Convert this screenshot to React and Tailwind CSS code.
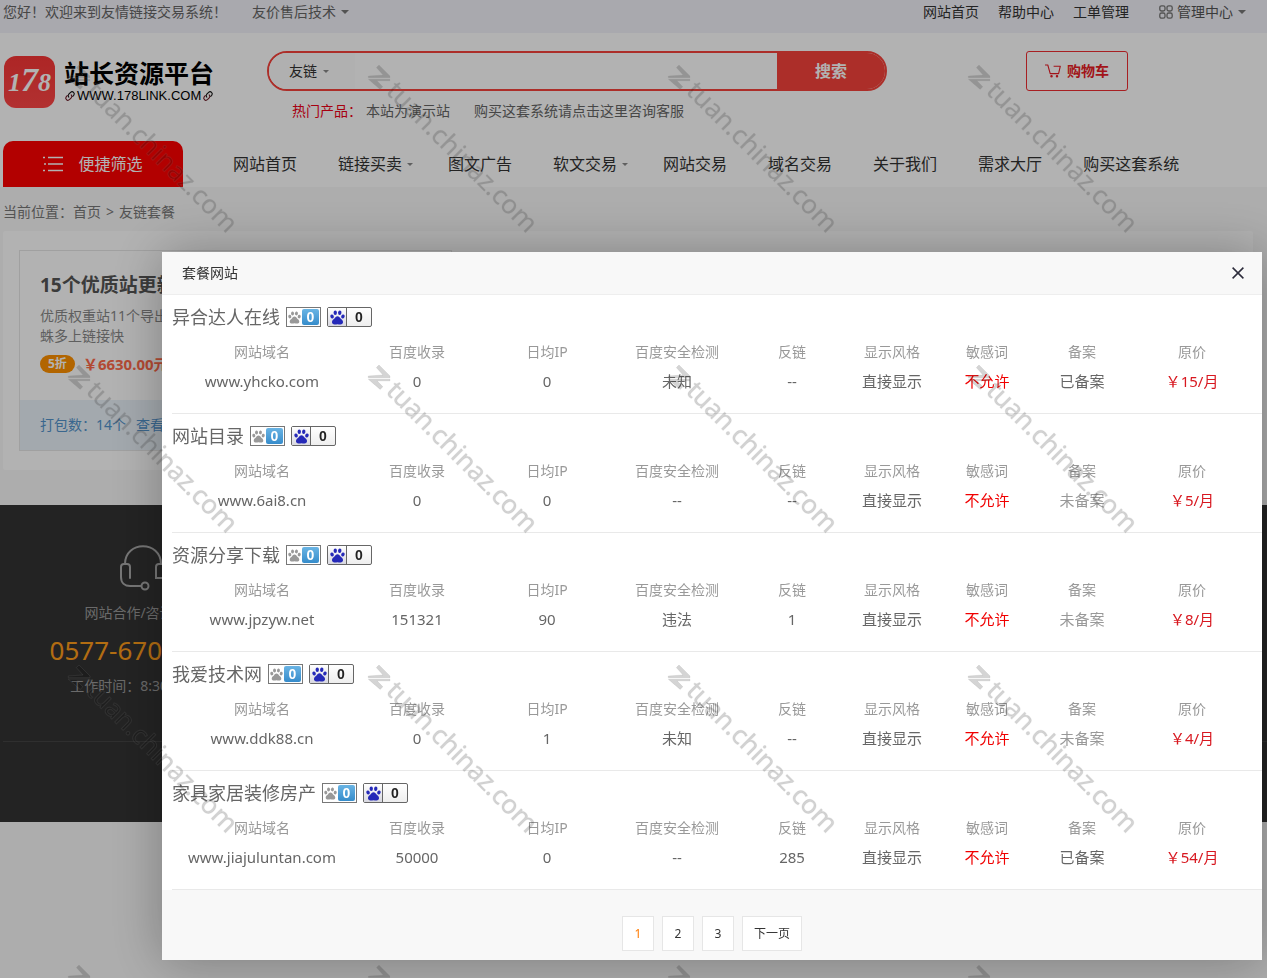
import { useState } from 'react';

const navItems = [
  { label: '网站首页' },
  { label: '链接买卖', menu: true },
  { label: '图文广告' },
  { label: '软文交易', menu: true },
  { label: '网站交易' },
  { label: '域名交易' },
  { label: '关于我们' },
  { label: '需求大厅' },
  { label: '购买这套系统' },
];

const columns = [
  { label: '网站域名', width: 'w-[180px]' },
  { label: '百度收录', width: 'w-[130px]' },
  { label: '日均IP', width: 'w-[130px]' },
  { label: '百度安全检测', width: 'w-[130px]' },
  { label: '反链', width: 'w-[100px]' },
  { label: '显示风格', width: 'w-[100px]' },
  { label: '敏感词', width: 'w-[90px]' },
  { label: '备案', width: 'w-[100px]' },
  { label: '原价', width: 'w-[120px]' },
];

const sites = [
  { name: '异合达人在线', domain: 'www.yhcko.com', indexed: '0', ip: '0', safety: '未知', links: '--', record: true, price: '15' },
  { name: '网站目录', domain: 'www.6ai8.cn', indexed: '0', ip: '0', safety: '--', links: '--', record: false, price: '5' },
  { name: '资源分享下载', domain: 'www.jpzyw.net', indexed: '151321', ip: '90', safety: '违法', links: '1', record: false, price: '8' },
  { name: '我爱技术网', domain: 'www.ddk88.cn', indexed: '0', ip: '1', safety: '未知', links: '--', record: false, price: '4' },
  { name: '家具家居装修房产', domain: 'www.jiajuluntan.com', indexed: '50000', ip: '0', safety: '--', links: '285', record: true, price: '54' },
];

function Caret({ small }) {
  return small ? (
    <span className="block border-x-3 border-t-3 border-x-transparent border-t-[#888]" />
  ) : (
    <span className="block border-x-4 border-t-4 border-x-transparent border-t-[#777]" />
  );
}

function Paw({ className }) {
  return (
    <svg viewBox="0 0 16 16" fill="currentColor" className={className} aria-hidden="true">
      <ellipse cx="2.2" cy="6.9" rx="1.8" ry="2.2" transform="rotate(-12 2.2 6.9)" />
      <ellipse cx="5.6" cy="3" rx="1.8" ry="2.4" />
      <ellipse cx="10.4" cy="3" rx="1.8" ry="2.4" transform="rotate(8 10.4 3)" />
      <ellipse cx="13.8" cy="6.9" rx="1.8" ry="2.2" transform="rotate(12 13.8 6.9)" />
      <path d="M8 6.7c1.5 0 2.2 1.1 3 2.1.9 1.1 2.9 2 2.9 4.1 0 1.7-1.2 2.7-2.9 2.6-1.1-.1-1.9-.4-3-.4s-1.9.3-3 .4c-1.7.1-2.9-.9-2.9-2.6 0-2.1 2-3 2.9-4.1.8-1 1.5-2.1 3-2.1z" />
    </svg>
  );
}

function ChainIcon() {
  return (
    <svg viewBox="0 0 12 12" fill="none" strokeWidth="1.1" strokeLinecap="round" className="size-3" aria-hidden="true">
      <path stroke="#111" d="M4.8 7.2a2.2 2.2 0 0 1 0-3L6.6 2.3a2.2 2.2 0 0 1 3.1 3.1L8.7 6.4" />
      <path stroke="#6a1824" d="M7.2 4.8a2.2 2.2 0 0 1 0 3L5.4 9.7a2.2 2.2 0 0 1-3.1-3.1L3.3 5.6" />
    </svg>
  );
}

function TopBar() {
  return (
    <div className="bg-[#f2f2f9] pb-[9px] text-sm leading-6 text-[#666]">
      <div className="flex justify-between pr-[21px] pl-[3px]">
        <div className="flex items-center">
          <span>您好！欢迎来到友情链接交易系统！</span>
          <a href="#service" className="ml-[25px] flex items-center gap-[5px]">
            友价售后技术
            <Caret />
          </a>
        </div>
        <div className="flex items-center gap-[19px] text-[#333]">
          <a href="#home">网站首页</a>
          <a href="#help">帮助中心</a>
          <a href="#ticket">工单管理</a>
          <a href="#admin" className="ml-[11px] flex items-center gap-1 text-[#555]">
            <svg viewBox="0 0 14 14" fill="none" stroke="#777" strokeWidth="1.3" className="size-[14px]" aria-hidden="true">
              <rect x=".8" y=".8" width="5.2" height="5.2" rx="1.8" />
              <rect x="8" y=".8" width="5.2" height="5.2" rx="1.8" />
              <rect x=".8" y="8" width="5.2" height="5.2" rx="1.8" />
              <rect x="8" y="8" width="5.2" height="5.2" rx="1.8" />
            </svg>
            管理中心
            <span className="ml-px">
              <Caret />
            </span>
          </a>
        </div>
      </div>
    </div>
  );
}

function Logo() {
  return (
    <a href="#home" className="mt-[5px] flex w-[263px] items-start gap-[9px] pl-px">
      <span className="flex h-[52px] w-[51px] items-baseline justify-center rounded-xl bg-linear-to-b from-[#f83636] to-[#ff4646] font-['Liberation_Serif',serif] leading-[48px] font-bold text-white italic">
        <span className="text-[26px]">1</span>
        <span className="text-[34px]">7</span>
        <span className="text-[26px]">8</span>
      </span>
      <span className="block text-black">
        <span className="mt-[2px] block text-[25px] leading-[30px] font-bold">站长资源平台</span>
        <span className="mt-px flex items-center gap-px font-['Liberation_Sans',sans-serif] text-[13px] leading-[14px]">
          <ChainIcon />
          WWW.178LINK.COM
          <ChainIcon />
        </span>
      </span>
    </a>
  );
}

function SearchBox() {
  const [keyword, setKeyword] = useState('');

  return (
    <div className="w-[620px]">
      <form className="flex h-10 overflow-hidden rounded-full border-2 border-[#f6433b]" onSubmit={(e) => e.preventDefault()}>
        <div className="flex w-[86px] items-center bg-[#fcfcfc] pl-5">
          <select aria-label="搜索类型" className="w-[34px] appearance-none text-sm text-[#333] outline-none">
            <option>友链</option>
          </select>
          <Caret small />
        </div>
        <input
          type="text"
          aria-label="搜索关键词"
          value={keyword}
          onChange={(e) => setKeyword(e.target.value)}
          className="min-w-0 flex-1 px-3 text-sm outline-none"
        />
        <button type="submit" className="w-[108px] bg-[#f6433b] text-base font-bold text-white">
          搜索
        </button>
      </form>
      <div className="flex pt-[10px] pl-[25px] text-sm text-[#666]">
        <span className="mr-1 text-[#f00018]">热门产品：</span>
        <a href="#demo" className="mr-6">本站为演示站</a>
        <a href="#buy">购买这套系统请点击这里咨询客服</a>
      </div>
    </div>
  );
}

function Header() {
  return (
    <header className="bg-white pt-[18px] pr-[14px] pl-[3px]">
      <div className="flex items-start">
        <Logo />
        <div className="ml-px flex flex-1">
          <SearchBox />
        </div>
        <a
          href="#cart"
          className="mr-[125px] flex h-10 w-[102px] items-center justify-center gap-[6px] rounded-[3px] border border-[#f02d32] text-sm font-bold text-[#e81c26]"
        >
          <svg viewBox="0 0 16 14" fill="none" stroke="currentColor" strokeWidth="1.1" className="h-[14px] w-4" aria-hidden="true">
            <path d="M0 1h2.8l2.4 8.6h8.4l1.7-7.4H8.6" strokeLinejoin="round" />
            <circle cx="6.5" cy="12.3" r=".7" fill="currentColor" />
            <circle cx="12" cy="12.3" r=".7" fill="currentColor" />
          </svg>
          购物车
        </a>
      </div>
      <div className="mt-[20px] flex">
        <button type="button" className="flex h-[46px] w-[180px] items-center justify-center gap-[15px] rounded-t-[10px] bg-[#ff0000] text-base text-white">
          <svg viewBox="0 0 20 16" stroke="currentColor" strokeWidth="1.5" className="h-4 w-5" aria-hidden="true">
            <path d="M5 1.5h15M5 8h15M5 14.5h15M0 1.5h2M1 8h2M0 14.5h2" />
          </svg>
          便捷筛选
        </button>
        <nav className="ml-[30px] flex text-base text-[#333]">
          {navItems.map((item) => (
            <a
              key={item.label}
              href="#nav"
              className={`flex items-center gap-[5px] pl-5 whitespace-nowrap ${item.menu ? 'pr-[15px]' : 'pr-[21px]'}`}
            >
              {item.label}
              {item.menu && <Caret small />}
            </a>
          ))}
        </nav>
      </div>
    </header>
  );
}

function PackageCard() {
  return (
    <div className="mr-[14px] ml-[3px] rounded-xs bg-white px-4 py-[19px]">
      <div className="w-[433px] border border-[#e6e6e6]">
        <div className="h-[149px] px-5 pt-5">
          <h2 className="text-[19px] leading-[28px] font-bold text-[#555]">15个优质站更新快权重高</h2>
          <p className="mt-[7px] text-sm leading-5 text-[#888]">
            优质权重站11个导出少收录快蜘
            <br />
            蛛多上链接快
          </p>
          <div className="mt-2 flex items-center gap-2">
            <span className="rounded-full bg-[#ff9100] px-2 text-xs leading-[18px] font-bold text-white">5折</span>
            <span className="text-[15px] leading-5 font-bold text-[#ff6a4a]">￥6630.00元</span>
          </div>
        </div>
        <div className="flex h-[50px] items-center gap-[10px] bg-[#eaf2f9] px-5 text-sm text-[#5394cc]">
          <span>打包数：14个</span>
          <a href="#detail">查看网站</a>
        </div>
      </div>
    </div>
  );
}

function Footer() {
  return (
    <footer className="mt-[35px] h-[317px] bg-[#333] pl-[3px] text-sm text-[#999]">
      <div className="border-b border-[#444]">
        <div className="flex h-[236px] w-[280px] flex-col items-center pt-10">
          <svg viewBox="0 0 46 46" fill="none" stroke="#aaa" strokeWidth="2" className="size-[46px]" aria-hidden="true">
            <path d="M5 19C5-4.700 41-4.700 41 19" />
            <path d="M10 33V22c0-2-1-3-3-3H4c-2 0-3 1-3 3v10c0 6 4 9 9 9h11" strokeLinecap="round" />
            <path d="M36 33V22c0-2 1-3 3-3h3c2 0 3 1 3 3v8c0 2-1 3-3 3z" />
            <circle cx="25" cy="41" r="3.5" />
          </svg>
          <p className="mt-3 leading-5">网站合作/咨询电话</p>
          <p className="mt-[9px] text-[26px] leading-[36px] text-[#ff9d1a]">0577-67030180</p>
          <p className="mt-2 leading-5">工作时间：8:30 - 18:00</p>
        </div>
      </div>
    </footer>
  );
}

function SiteBadges() {
  return (
    <span className="flex gap-[6px] font-['Liberation_Sans',sans-serif] font-bold">
      <span className="flex h-5 w-[35px] items-center justify-between border border-[#777] bg-white px-px">
        <Paw className="size-[13px] text-[#999]" />
        <span className="flex h-4 w-[17px] items-center justify-center rounded-xs bg-linear-to-b from-[#69b4e4] to-[#358ccb] text-sm text-white">
          0
        </span>
      </span>
      <span className="flex h-5 w-[45px] items-stretch rounded-xs border border-[#666] bg-linear-to-b from-white to-[#eee]">
        <span className="flex w-[19px] items-center justify-center border-r border-[#666] bg-linear-to-b from-white to-[#d8d8e0]">
          <Paw className="size-[15px] text-[#2529b8]" />
        </span>
        <span className="flex flex-1 items-center justify-center text-sm text-[#222]">0</span>
      </span>
    </span>
  );
}

function SiteSection({ site }) {
  return (
    <section className="ml-[10px] border-b border-[#e9e9e9] pr-[10px] pb-[18px]">
      <div className="flex h-[42px] items-center gap-[6px] pt-[2px]">
        <h3 className="text-lg text-[#666]">{site.name}</h3>
        <SiteBadges />
      </div>
      <table aria-label={site.name} className="w-full table-fixed text-center">
        <thead>
          <tr className="h-[30px] text-sm text-[#999]">
            {columns.map((col) => (
              <th key={col.label} className={`p-0 font-normal ${col.width}`}>
                {col.label}
              </th>
            ))}
          </tr>
        </thead>
        <tbody>
          <tr className="h-7 text-[15px] text-[#666]">
            <td>{site.domain}</td>
            <td>{site.indexed}</td>
            <td>{site.ip}</td>
            <td>{site.safety}</td>
            <td>{site.links}</td>
            <td>直接显示</td>
            <td className="text-[#f00000]">不允许</td>
            <td className={site.record ? '' : 'text-[#999]'}>{site.record ? '已备案' : '未备案'}</td>
            <td className="text-[#d81820]">￥{site.price}/月</td>
          </tr>
        </tbody>
      </table>
    </section>
  );
}

function Pagination() {
  const [page, setPage] = useState(1);

  return (
    <div className="flex justify-center gap-2 bg-[#f8f8f8] pt-[26px] pb-[9px] text-xs text-[#333]">
      {[1, 2, 3].map((n) => (
        <button
          key={n}
          type="button"
          onClick={() => setPage(n)}
          className={`h-[35px] w-8 border border-[#e6e6e6] bg-white ${page === n ? 'text-[#ff7a00]' : ''}`}
        >
          {n}
        </button>
      ))}
      <button type="button" onClick={() => setPage(Math.min(page + 1, 3))} className="h-[35px] border border-[#e6e6e6] bg-white px-[11px]">
        下一页
      </button>
    </div>
  );
}

function SiteDialog() {
  return (
    <div className="fixed inset-0 bg-black/30 pt-[252px] pr-[5px] pl-[162px]">
      <div role="dialog" aria-label="套餐网站" className="bg-white shadow-[1px_1px_50px_rgba(0,0,0,0.3)]">
        <div className="flex h-[43px] items-center justify-between border-b border-[#eee] bg-[#f8f8f8] pr-[18px] pl-5 text-sm text-[#333]">
          <span>套餐网站</span>
          <button type="button" aria-label="关闭">
            <svg viewBox="0 0 12 12" fill="none" stroke="#2d2c3b" strokeWidth="1.5" className="size-3" aria-hidden="true">
              <path d="M.6.6l10.8 10.8M11.4.6L.6 11.4" />
            </svg>
          </button>
        </div>
        {sites.map((site) => (
          <SiteSection key={site.domain} site={site} />
        ))}
        <Pagination />
      </div>
    </div>
  );
}

// Diagonal site mark, repeated every 300px over the whole window
function Watermark() {
  return (
    <svg className="pointer-events-none fixed inset-0 h-full w-full" aria-hidden="true">
      <defs>
        <pattern id="mark" x="60" y="60" width="300" height="300" patternUnits="userSpaceOnUse">
          <g fill="#000" fillOpacity=".17" stroke="#888" strokeOpacity=".15" strokeWidth="1">
            <path d="M16.4 7.6L19 5l11 11v1.700H8.300V16l14.700-1z" />
            <path d="M8.300 19.200H30v1.600H17l5.800 6-2.600 2.600z" />
            <text x="22" y="15" fontSize="26" fontFamily="'Noto Sans', sans-serif" transform="translate(20 6) rotate(45)">
              tuan.chinaz.com
            </text>
          </g>
        </pattern>
      </defs>
      <rect width="100%" height="100%" fill="url(#mark)" />
    </svg>
  );
}

export default function App() {
  return (
    <div className="min-h-screen bg-[#f8f8f8] font-['Noto_Sans','Noto_Sans_CJK_SC',sans-serif]">
      <TopBar />
      <Header />
      <div className="flex h-11 pt-[6px] pl-[3px] text-sm leading-[38px] text-[#777]">
        当前位置：
        <a href="#home">首页</a>
        <span className="px-[5px]">&gt;</span>
        <a href="#package">友链套餐</a>
      </div>
      <PackageCard />
      <Footer />
      <SiteDialog />
      <Watermark />
    </div>
  );
}
